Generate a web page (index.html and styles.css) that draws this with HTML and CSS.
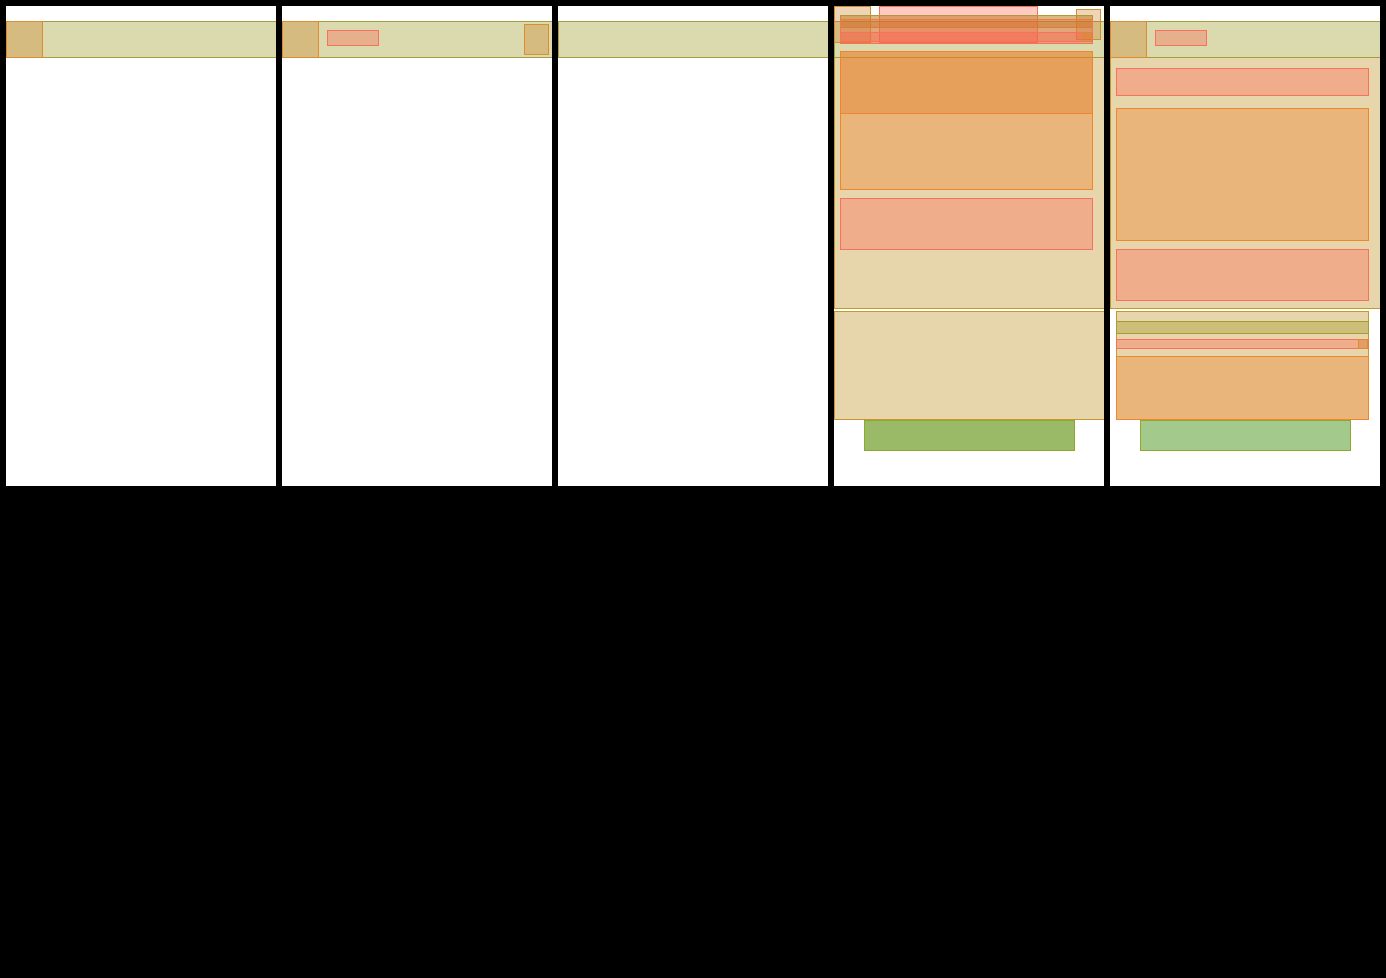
FILE: index.html
```
<!DOCTYPE html>
<html lang="en">
<head>
<meta charset="utf-8">
<title>Layout debug panels</title>
<link rel="stylesheet" href="styles.css">
</head>
<body>
<main class="board">
  <section class="panel">
    <header class="bar"><div class="icon"></div></header>
  </section>
  <section class="panel">
    <header class="bar">
      <div class="icon"></div>
      <div class="title"></div>
      <div class="action"></div>
    </header>
  </section>
  <section class="panel">
    <header class="bar"></header>
  </section>
  <section class="panel">
    <header class="bar"></header>
    <div class="content">
      <div class="media media-tall"></div>
      <div class="text text-lg"></div>
    </div>
    <div class="content content-low"></div>
    <div class="button button-olive"></div>
    <div class="float float-icon"></div>
    <div class="float float-title"></div>
    <div class="float float-action"></div>
    <div class="float float-form"></div>
    <div class="float float-row"></div>
    <div class="float float-pink"></div>
    <div class="float float-strip"></div>
    <div class="float float-knob"></div>
    <div class="float float-media"></div>
  </section>
  <section class="panel">
    <header class="bar">
      <div class="icon"></div>
      <div class="title"></div>
    </header>
    <div class="content">
      <div class="text text-sm"></div>
      <div class="media media-mid"></div>
      <div class="text text-lg"></div>
    </div>
    <div class="form">
      <div class="form-row"></div>
      <div class="form-strip"><div class="knob"></div></div>
      <div class="media media-form"></div>
    </div>
    <div class="button button-green"></div>
  </section>
</main>
</body>
</html>
```
FILE: styles.css
```
* {
  box-sizing: border-box;
}

html,
body {
  margin: 0;
  height: 100%;
  background: #000;
}

.board {
  display: flex;
  gap: 6px;
  padding: 6px;
}

.panel {
  position: relative;
  width: 270px;
  height: 480px;
  padding-top: 15px;
  background: #fff;
  overflow: hidden;
}

.bar {
  display: flex;
  align-items: center;
  height: 37px;
  background: rgba(145, 140, 10, 0.33);
  border: 1px solid #a49d3d;
  border-right: none;
}

.icon {
  width: 37px;
  height: 37px;
  margin: -1px 0 -1px -1px;
  background: rgba(205, 125, 30, 0.32);
  border: 1px solid #e08b2e;
  flex: none;
}

.title {
  align-self: flex-start;
  width: 52px;
  height: 16px;
  margin: 8px 0 0 8px;
  background: rgba(255, 90, 70, 0.32);
  border: 1px solid #f9705c;
}

.action {
  width: 25px;
  height: 31px;
  margin-left: auto;
  margin-right: 3px;
  background: rgba(205, 125, 30, 0.32);
  border: 1px solid #e08b2e;
}

.content {
  height: 251px;
  padding: 10px 0 0 5px;
  background: rgba(195, 150, 45, 0.4);
  border-left: 1px solid #c4982d;
  border-bottom: 1px solid #c4982d;
}

.content-low {
  height: 109px;
  margin-top: 2px;
  padding: 0;
  border-top: 1px solid #c4982d;
}

.media {
  width: 253px;
  background: rgba(240, 125, 40, 0.36);
  border: 1px solid #f0862c;
}

.media-tall {
  height: 139px;
  margin-top: -17px;
}

.media-mid {
  height: 133px;
  margin-top: 12px;
}

.media-form {
  height: 64px;
  margin: 7px -1px 0;
}

.text {
  width: 253px;
  background: rgba(255, 90, 70, 0.32);
  border: 1px solid #f9705c;
}

.text-sm {
  height: 28px;
}

.text-lg {
  height: 52px;
  margin-top: 8px;
}

.form {
  width: 253px;
  height: 109px;
  margin: 2px 0 0 6px;
  padding-top: 9px;
  background: rgba(195, 150, 45, 0.4);
  border: 1px solid #c4982d;
}

.form-row {
  height: 13px;
  margin: 0 -1px;
  background: rgba(150, 145, 20, 0.33);
  border: 1px solid #a89a35;
}

.form-strip {
  display: flex;
  justify-content: flex-end;
  height: 10px;
  margin: 5px -1px 0;
  background: rgba(255, 90, 70, 0.32);
  border: 1px solid #f9705c;
  border-right: none;
}

.knob {
  width: 10px;
  height: 10px;
  margin: -1px 1px -1px 0;
  background: rgba(205, 125, 30, 0.32);
  border: 1px solid #e08b2e;
}

.button {
  width: 211px;
  height: 31px;
  margin-left: 30px;
  border: 1px solid #8fa82a;
}

.button-olive {
  background: #9bba68;
}

.button-green {
  background: #a3c98c;
}

.float {
  position: absolute;
  width: 253px;
  left: 6px;
  border: 1px solid #f9705c;
}

.float-icon {
  left: 0;
  top: 0;
  width: 37px;
  height: 37px;
  background: rgba(205, 125, 30, 0.32);
  border-color: #d0902c;
}

.float-title {
  left: 45px;
  top: 0;
  width: 159px;
  height: 37px;
  background: rgba(255, 90, 70, 0.32);
}

.float-action {
  left: 242px;
  top: 3px;
  width: 25px;
  height: 31px;
  background: rgba(205, 125, 30, 0.32);
  border-color: #d0902c;
}

.float-form {
  top: 9px;
  height: 29px;
  background: rgba(195, 150, 45, 0.2);
  border-color: transparent;
}

.float-row {
  top: 9px;
  height: 13px;
  background: rgba(175, 130, 20, 0.45);
  border-color: #b3973a;
}

.float-pink {
  top: 13px;
  height: 25px;
  background: rgba(255, 90, 70, 0.32);
}

.float-strip {
  top: 26px;
  height: 10px;
  background: rgba(255, 90, 70, 0.32);
}

.float-knob {
  left: 248px;
  top: 26px;
  width: 10px;
  height: 10px;
  background: rgba(205, 125, 30, 0.12);
  border-color: #d0902c;
}

.float-media {
  top: 45px;
  height: 63px;
  background: rgba(228, 125, 40, 0.36);
  border-color: #f0862c;
}
```
